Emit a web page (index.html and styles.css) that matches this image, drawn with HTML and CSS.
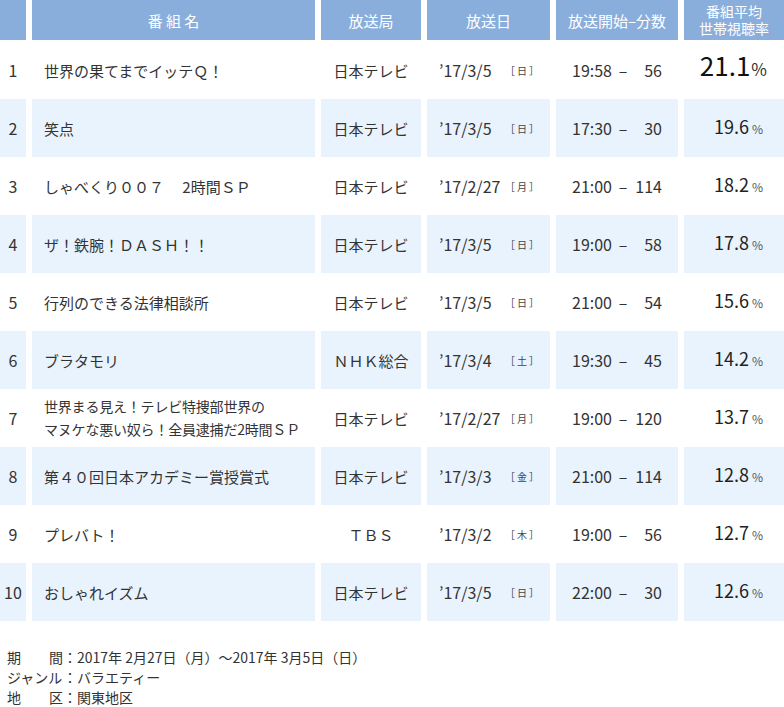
FILE: index.html
```html
<!DOCTYPE html>
<html lang="ja">
<head>
<meta charset="utf-8">
<link rel="stylesheet" href="styles.css">
</head>
<body>
<div class="table">
  <div class="row head">
    <div class="cell">&nbsp;</div>
    <div class="cell c">番 組 名</div>
    <div class="cell c">放送局</div>
    <div class="cell c">放送日</div>
    <div class="cell c">放送開始–分数</div>
    <div class="cell c two">番組平均<br>世帯視聴率</div>
  </div>
  <div class="body">
    <div class="row">
      <div class="cell rank">1</div>
      <div class="cell name">世界の果てまでイッテＱ！</div>
      <div class="cell c">日本テレビ</div>
      <div class="cell date"><span class="d">’17/3/5</span><span class="w">［日］</span></div>
      <div class="cell time"><span class="t">19:58</span><span class="dash">–</span><span class="m">56</span></div>
      <div class="cell rate big"><span class="n">21.1</span><span class="p">%</span></div>
    </div>
    <div class="row alt">
      <div class="cell rank">2</div>
      <div class="cell name">笑点</div>
      <div class="cell c">日本テレビ</div>
      <div class="cell date"><span class="d">’17/3/5</span><span class="w">［日］</span></div>
      <div class="cell time"><span class="t">17:30</span><span class="dash">–</span><span class="m">30</span></div>
      <div class="cell rate"><span class="n">19.6</span><span class="p">%</span></div>
    </div>
    <div class="row">
      <div class="cell rank">3</div>
      <div class="cell name">しゃべくり００７　 2時間ＳＰ</div>
      <div class="cell c">日本テレビ</div>
      <div class="cell date"><span class="d">’17/2/27</span><span class="w">［月］</span></div>
      <div class="cell time"><span class="t">21:00</span><span class="dash">–</span><span class="m">114</span></div>
      <div class="cell rate"><span class="n">18.2</span><span class="p">%</span></div>
    </div>
    <div class="row alt">
      <div class="cell rank">4</div>
      <div class="cell name">ザ！鉄腕！ＤＡＳＨ！！</div>
      <div class="cell c">日本テレビ</div>
      <div class="cell date"><span class="d">’17/3/5</span><span class="w">［日］</span></div>
      <div class="cell time"><span class="t">19:00</span><span class="dash">–</span><span class="m">58</span></div>
      <div class="cell rate"><span class="n">17.8</span><span class="p">%</span></div>
    </div>
    <div class="row">
      <div class="cell rank">5</div>
      <div class="cell name">行列のできる法律相談所</div>
      <div class="cell c">日本テレビ</div>
      <div class="cell date"><span class="d">’17/3/5</span><span class="w">［日］</span></div>
      <div class="cell time"><span class="t">21:00</span><span class="dash">–</span><span class="m">54</span></div>
      <div class="cell rate"><span class="n">15.6</span><span class="p">%</span></div>
    </div>
    <div class="row alt">
      <div class="cell rank">6</div>
      <div class="cell name">ブラタモリ</div>
      <div class="cell c">ＮＨＫ総合</div>
      <div class="cell date"><span class="d">’17/3/4</span><span class="w">［土］</span></div>
      <div class="cell time"><span class="t">19:30</span><span class="dash">–</span><span class="m">45</span></div>
      <div class="cell rate"><span class="n">14.2</span><span class="p">%</span></div>
    </div>
    <div class="row">
      <div class="cell rank">7</div>
      <div class="cell name long">世界まる見え！テレビ特捜部世界の<br>マヌケな悪い奴ら！全員逮捕だ2時間ＳＰ</div>
      <div class="cell c">日本テレビ</div>
      <div class="cell date"><span class="d">’17/2/27</span><span class="w">［月］</span></div>
      <div class="cell time"><span class="t">19:00</span><span class="dash">–</span><span class="m">120</span></div>
      <div class="cell rate"><span class="n">13.7</span><span class="p">%</span></div>
    </div>
    <div class="row alt">
      <div class="cell rank">8</div>
      <div class="cell name">第４０回日本アカデミー賞授賞式</div>
      <div class="cell c">日本テレビ</div>
      <div class="cell date"><span class="d">’17/3/3</span><span class="w">［金］</span></div>
      <div class="cell time"><span class="t">21:00</span><span class="dash">–</span><span class="m">114</span></div>
      <div class="cell rate"><span class="n">12.8</span><span class="p">%</span></div>
    </div>
    <div class="row">
      <div class="cell rank">9</div>
      <div class="cell name">プレバト！</div>
      <div class="cell c">ＴＢＳ</div>
      <div class="cell date"><span class="d">’17/3/2</span><span class="w">［木］</span></div>
      <div class="cell time"><span class="t">19:00</span><span class="dash">–</span><span class="m">56</span></div>
      <div class="cell rate"><span class="n">12.7</span><span class="p">%</span></div>
    </div>
    <div class="row alt">
      <div class="cell rank">10</div>
      <div class="cell name">おしゃれイズム</div>
      <div class="cell c">日本テレビ</div>
      <div class="cell date"><span class="d">’17/3/5</span><span class="w">［日］</span></div>
      <div class="cell time"><span class="t">22:00</span><span class="dash">–</span><span class="m">30</span></div>
      <div class="cell rate"><span class="n">12.6</span><span class="p">%</span></div>
    </div>
  </div>
</div>
<div class="notes">
  <p><span class="lbl">期　　間</span>：2017年 2月27日（月）～2017年 3月5日（日）</p>
  <p><span class="lbl">ジャンル</span>：バラエティー</p>
  <p><span class="lbl">地　　区</span>：関東地区</p>
</div>
</body>
</html>
```
FILE: styles.css
```css
html, body {
  margin: 0;
  padding: 0;
  background: #fff;
}
body {
  font-family: "Noto Sans CJK JP", "Noto Sans", sans-serif;
  color: #333;
  font-size: 15px;
  width: 784px;
}
.row {
  display: grid;
  grid-template-columns: 26px 283px 100px 123px 122px 100px;
  grid-template-rows: 100%;
  column-gap: 6px;
  height: 58px;
}
.head {
  height: 40px;
}
.head .cell {
  background: #8aaedb;
  color: #fff;
  font-size: 15px;
}
.head .two {
  font-size: 14px;
  line-height: 17px;
}
.body {
  padding-top: 1px;
}
.cell {
  display: flex;
  align-items: center;
  white-space: nowrap;
  overflow: hidden;
}
.alt .cell {
  background: #e9f3fd;
}
.c {
  justify-content: center;
  text-align: center;
}
.rank {
  justify-content: center;
  font-size: 16px;
}
.name {
  padding-left: 12px;
  line-height: 23px;
}
.name.long {
  font-size: 14px;
  letter-spacing: -0.2px;
}
.date {
  padding-left: 12px;
  font-size: 16px;
}
.date .d {
  width: 66px;
}
.date .w {
  font-size: 10px;
  letter-spacing: 2px;
  color: #444;
}
.time {
  padding-left: 16px;
  font-size: 16px;
}
.time .t {
  width: 40px;
}
.time .dash {
  width: 22px;
  text-align: center;
}
.time .m {
  width: 28px;
  text-align: right;
}
.rate {
  display: block;
  text-align: right;
  line-height: 58px;
  padding-right: 21px;
}
.rate .n,
.rate .p {
  line-height: 1;
}
.rate .n {
  font-size: 18px;
  color: #222;
}
.rate .p {
  font-size: 12px;
  color: #555;
  margin-left: 3px;
}
.rate.big {
  padding-right: 17px;
}
.rate.big .n {
  font-size: 26px;
  color: #111;
}
.rate.big .p {
  font-size: 17px;
  margin-left: 1px;
  color: #333;
}
.notes {
  padding: 26px 0 0 7px;
  font-size: 14px;
  line-height: 20px;
}
.notes p {
  margin: 0;
}
.lbl {
  display: inline-block;
  width: 56px;
}
```
